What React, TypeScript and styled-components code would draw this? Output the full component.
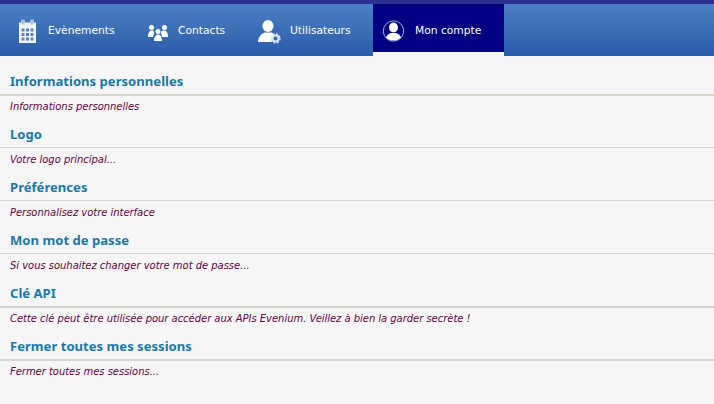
import { createGlobalStyle, styled } from "styled-components";

const GlobalStyle = createGlobalStyle`
  html, body {
    margin: 0;
    padding: 0;
    background: #f6f6f6;
    font-family: "DejaVu Sans", Verdana, sans-serif;
  }
`;

const TopStrip = styled.div`
  height: 4px;
  background: #2e3192;
`;

const NavBar = styled.nav`
  height: 52px;
  display: flex;
  background: linear-gradient(#4d80c4, #2a5ca8);
`;

const NavItem = styled.a<{ $width: number; $pad: number; $active?: boolean }>`
  width: ${(p) => p.$width}px;
  height: 52px;
  box-sizing: border-box;
  display: flex;
  align-items: center;
  padding-left: ${(p) => p.$pad}px;
  color: #fff;
  font-size: 10.7px;
  background: ${(p) => (p.$active ? "linear-gradient(#000080 48px, #f6f6f6 48px)" : "transparent")};
`;

const NavIcon = styled.svg`
  width: 26px;
  height: 28px;
  margin-right: 7px;
  flex-shrink: 0;
  fill: #fff;
`;

const Content = styled.main`
  padding-top: 17px;
`;

const Section = styled.section`
  height: 53px;
`;

const Title = styled.h2`
  margin: 0 0 0 10px;
  font-family: "Noto Sans", sans-serif;
  font-size: 13.1px;
  line-height: 17px;
  font-weight: bold;
  color: #1a78a8;
`;

const Rule = styled.hr<{ $thick?: boolean }>`
  margin: 4px 0 ${(p) => (p.$thick ? 4 : 5)}px;
  border: 0;
  height: ${(p) => (p.$thick ? 2 : 1)}px;
  background: #d8d4ca;
`;

const Description = styled.p`
  margin: 0 0 0 10px;
  font-size: 10px;
  line-height: 13px;
  letter-spacing: -0.035px;
  font-style: italic;
  color: #660044;
`;

const CalendarIcon = () => (
  <NavIcon viewBox="0 0 26 28">
    <path d="M4 6.500h2.500V4h3v2.500h6V4h3v2.500H21V27H4z" fill="#f2f6fc" />
    <path d="M6.500 3.500h3v5h-3zM15.500 3.500h3v5h-3z" fill="#a9c2e4" />
    <path
      d="M6.500 12.500h3v3h-3zM11 12.500h3v3h-3zM15.500 12.500h3v3h-3zM6.500 17h3v3h-3zM11 17h3v3h-3zM15.500 17h3v3h-3zM6.500 21.500h3v3h-3zM11 21.500h3v3h-3zM15.500 21.500h3v3h-3z"
      fill="#5a86c0"
    />
  </NavIcon>
);

const ContactsIcon = () => (
  <NavIcon viewBox="0 0 26 28">
    <circle cx="6.500" cy="11.500" r="2.500" />
    <path d="M3 21c0-4 1.500-6.500 3.500-6.500S9 15 9 17l-1 4z" />
    <circle cx="19.500" cy="11.500" r="2.500" />
    <path d="M17 21l-1-4c0-2 1.500-2.500 3.500-2.500S23 17 23 21z" />
    <circle cx="13" cy="15.500" r="2.500" />
    <path d="M9 25c0-4 2-6.500 4-6.500s4 2.500 4 6.500z" />
  </NavIcon>
);

const UsersIcon = () => (
  <NavIcon viewBox="0 0 26 28">
    <ellipse cx="11" cy="10" rx="5.500" ry="6" />
    <path d="M1 26c.5-5 3-8 6.500-9.500h7c1.500.5 2.500 1.500 3 2.500-2.500 1-3.500 4-2 7z" />
    <circle cx="18.500" cy="22.500" r="3" fill="none" stroke="#dce8f6" strokeWidth="2" />
    <circle cx="18.500" cy="22.500" r="4.500" fill="none" stroke="#dce8f6" strokeWidth="1.500" strokeDasharray="1.800 1.730" />
  </NavIcon>
);

const AccountIcon = () => (
  <NavIcon viewBox="0 0 26 28">
    <circle cx="11.500" cy="15" r="10.200" fill="none" stroke="#a8a8d8" strokeWidth="1" />
    <ellipse cx="11.500" cy="11.500" rx="4.500" ry="5" />
    <path d="M4 21.500c1-2.500 3-4 5-4.500h5c2 .5 4 2 5 4.500-2 2-4.500 3-7.500 3s-5.500-1-7.500-3z" />
  </NavIcon>
);

const sections = [
  { title: "Informations personnelles", text: "Informations personnelles", thick: true },
  { title: "Logo", text: "Votre logo principal..." },
  { title: "Préférences", text: "Personnalisez votre interface" },
  { title: "Mon mot de passe", text: "Si vous souhaitez changer votre mot de passe..." },
  { title: "Clé API", text: "Cette clé peut être utilisée pour accéder aux APIs Evenium. Veillez à bien la garder secrète !", thick: true },
  { title: "Fermer toutes mes sessions", text: "Fermer toutes mes sessions...", thick: true },
];

export default function App() {
  return (
    <>
      <GlobalStyle />
      <TopStrip />
      <NavBar>
        <NavItem $width={130} $pad={15}><CalendarIcon />Evènements</NavItem>
        <NavItem $width={112} $pad={15}><ContactsIcon />Contacts</NavItem>
        <NavItem $width={131} $pad={15}><UsersIcon />Utilisateurs</NavItem>
        <NavItem $width={131} $pad={9} $active><AccountIcon />Mon compte</NavItem>
      </NavBar>
      <Content>
        {sections.map((s) => (
          <Section key={s.title}>
            <Title>{s.title}</Title>
            <Rule $thick={s.thick} />
            <Description>{s.text}</Description>
          </Section>
        ))}
      </Content>
    </>
  );
}
